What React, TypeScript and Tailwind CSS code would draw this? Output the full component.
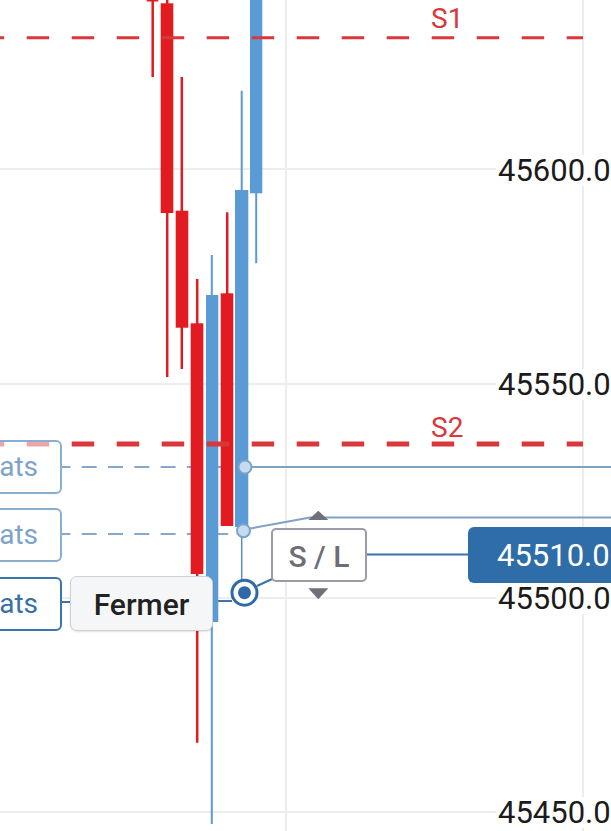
import React from "react";

const RED = "#e11b1f";
const BLUE = "#5b9bd5";
const SRED = "#d9373b";

type Candle = { x: number; w: number; top: number; bot: number; wx: number; wt: number; wb: number; c: string };

const candles: Candle[] = [
  { x: 146.7, w: 11.6, top: -10, bot: 1.5, wx: 152.7, wt: 0, wb: 77, c: RED },
  { x: 160.7, w: 12.6, top: 3.3, bot: 213, wx: 167.2, wt: 0, wb: 377, c: RED },
  { x: 175.7, w: 12.6, top: 210.7, bot: 327.7, wx: 181.8, wt: 77, wb: 369, c: RED },
  { x: 190.7, w: 12.6, top: 323.3, bot: 574, wx: 197.2, wt: 279, wb: 742.7, c: RED },
  { x: 206, w: 12.3, top: 295, bot: 622, wx: 211.8, wt: 255, wb: 824, c: BLUE },
  { x: 220.7, w: 12.6, top: 293.3, bot: 526, wx: 227.2, wt: 212.3, wb: 526, c: RED },
  { x: 235, w: 13.3, top: 190, bot: 527, wx: 241.7, wt: 90.7, wb: 527, c: BLUE },
  { x: 250, w: 12.3, top: -10, bot: 193.3, wx: 256.2, wt: 0, wb: 263.3, c: BLUE },
];

function Chart() {
  return (
    <svg className="absolute left-0 top-0" width={611} height={831} viewBox="0 0 611 831">
      {[169, 384, 598, 812].map((y) => (
        <line key={y} x1={0} x2={611} y1={y} y2={y} stroke="#ededed" strokeWidth={2} />
      ))}
      {[286, 583].map((x) => (
        <line key={x} x1={x} x2={x} y1={0} y2={831} stroke="#ededed" strokeWidth={2} />
      ))}

      <line x1={62} x2={238} y1={467} y2={467} stroke="#86a8cc" strokeWidth={2} strokeDasharray="15 11.3" strokeDashoffset={6.6} />
      <line x1={62} x2={236} y1={534} y2={534} stroke="#86a8cc" strokeWidth={2} strokeDasharray="15 11.3" strokeDashoffset={6.6} />
      <line x1={62} x2={72} y1={602} y2={602} stroke="#3c74ad" strokeWidth={2} />
      <line x1={212} x2={232} y1={601} y2={601} stroke="#3c74ad" strokeWidth={2} />

      {candles.map((c, i) => (
        <g key={i}>
          <line x1={c.wx} x2={c.wx} y1={c.wt} y2={c.wb} stroke={c.c} strokeWidth={c.c === RED ? 2.5 : 2} />
          <rect x={c.x} y={c.top} width={c.w} height={c.bot - c.top} fill={c.c} />
        </g>
      ))}

      <line x1={0} x2={583} y1={37.7} y2={37.7} stroke={SRED} strokeWidth={3} strokeDasharray="22.5 22.5" strokeDashoffset={18.3} />
      <line x1={0} x2={583} y1={444} y2={444} stroke={SRED} strokeWidth={5} strokeDasharray="22.5 22.5" strokeDashoffset={18.3} />

      <line x1={251} x2={611} y1={467} y2={467} stroke="#7fa1c5" strokeWidth={2} />
      <polyline points="250,528.5 310,517.5 611,517.5" fill="none" stroke="#7fa1c5" strokeWidth={2} />
      <line x1={241.7} x2={241.7} y1={537} y2={581} stroke="#5a8cc0" strokeWidth={1.5} />
      <line x1={257} x2={272} y1={586} y2={579} stroke="#3a72ab" strokeWidth={2} />
      <line x1={366} x2={470} y1={554.5} y2={554.5} stroke="#3a72ab" strokeWidth={2} />

      <polygon points="308.3,520 328.3,520 318.3,510.7" fill="#70707a" />
      <polygon points="308.3,588.3 328.3,588.3 318.3,599.3" fill="#70707a" />

      <circle cx={245} cy={467} r={6.5} fill="#c7dbf0" stroke="#7aa2cb" strokeWidth={2} />
      <circle cx={243.5} cy={530.7} r={6.5} fill="#c7dbf0" stroke="#7aa2cb" strokeWidth={2} />
      <circle cx={244.5} cy={592.7} r={12.5} fill="#ffffff" stroke="#2f6aa7" strokeWidth={3} />
      <circle cx={244.5} cy={592.7} r={6.5} fill="#2f6aa7" />
    </svg>
  );
}

const axisPrices = ["45600.0", "45550.0", "45500.0", "45450.0"];

export default function App() {
  return (
    <div
      className="relative h-[831px] w-[611px] overflow-hidden bg-white"
      style={{ fontFamily: "Roboto, 'Noto Sans', Arial, sans-serif" }}
    >
      <Chart />

      {/* S labels */}
      <div className="absolute left-[431px] top-[5px] text-[28px] leading-[28px] text-[#d9373b]">S1</div>
      <div className="absolute left-[431px] top-[414px] text-[28px] leading-[28px] text-[#d9373b]">S2</div>

      {/* price axis */}
      <div className="absolute left-[496px] top-[155px] flex flex-col gap-[183px]">
        {axisPrices.map((p) => (
          <div key={p} className="h-[31px] bg-white pl-[2px] text-[31px] leading-[31px] text-[#1b1b1b] whitespace-nowrap">
            {p}
          </div>
        ))}
      </div>

      {/* S/L control + current order price */}
      <div className="absolute left-[271px] top-[527px] flex items-center gap-[101px]">
        <div className="flex h-[54px] w-[96px] items-center justify-center rounded-[5px] border-2 border-[#9c9ca6] bg-white pt-[4px] text-[30px] font-medium leading-[30px] text-[#6d6d77]">
          S / L
        </div>
        <div className="flex h-[56px] w-[170px] items-center rounded-[6px] bg-[#2e6da8] pl-[29px] text-[31px] leading-[31px] text-white whitespace-nowrap">
          45510.0
        </div>
      </div>

      {/* left order tags */}
      <div className="absolute left-[-24px] top-[440px] flex flex-col gap-[14px]">
        <div className="flex h-[54px] w-[86px] items-center justify-end rounded-[6px] border-2 border-[#8aaed2] bg-white/55 pr-[22px] text-[28px] leading-[30px] text-[#7ea3c9]">
          ats
        </div>
        <div className="flex h-[54px] w-[86px] items-center justify-end rounded-[6px] border-2 border-[#8aaed2] bg-white/55 pr-[22px] text-[28px] leading-[30px] text-[#7ea3c9]">
          ats
        </div>
        <div className="flex items-center gap-[8px]">
          <div className="flex h-[54px] w-[86px] items-center justify-end rounded-[6px] border-2 border-[#3c74ad] bg-white pr-[22px] text-[28px] leading-[30px] text-[#3a6ea6]">
            ats
          </div>
          <div className="flex h-[55px] w-[143px] items-center justify-center rounded-[7px] border-[1.5px] border-[#cdd1d5] bg-[#f5f6f7] pt-[3px] text-[30px] font-medium leading-[30px] text-[#222222] shadow-[0_1px_2px_rgba(0,0,0,0.12)]">
            Fermer
          </div>
        </div>
      </div>
    </div>
  );
}
